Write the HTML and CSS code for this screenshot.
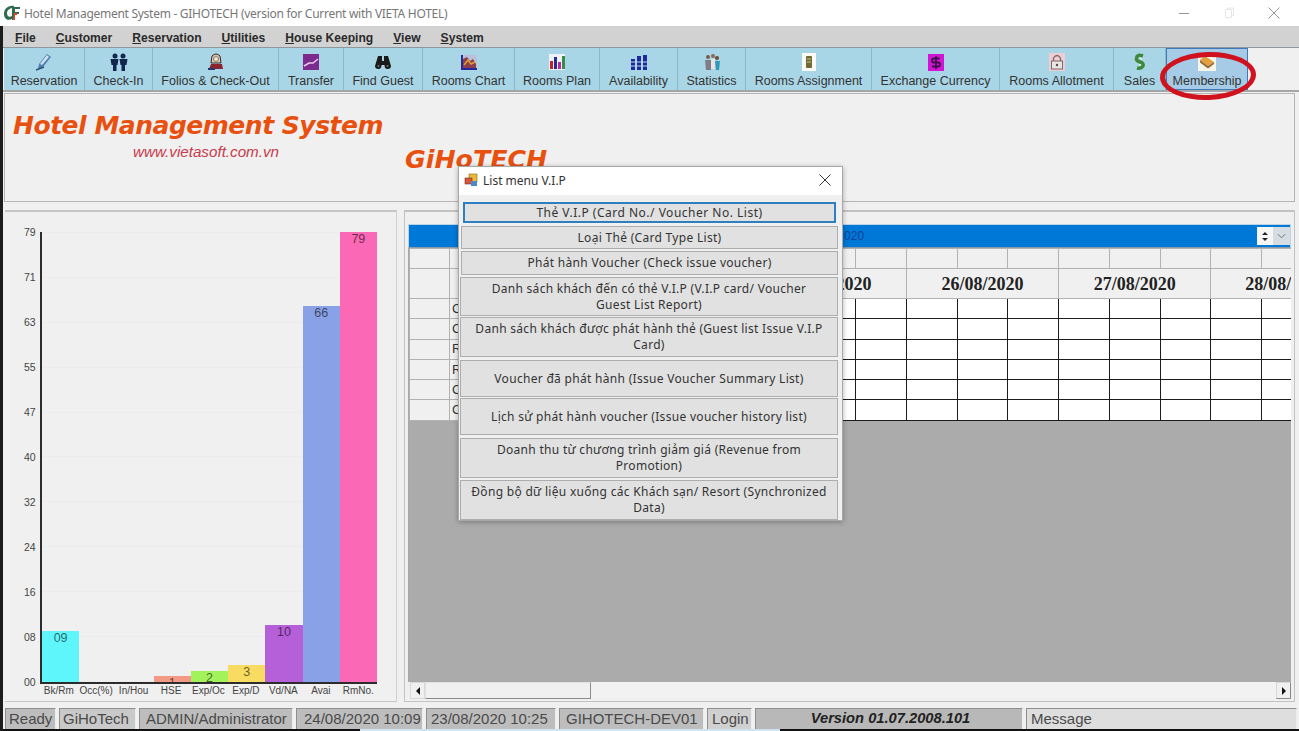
FILE: index.html
```html
<!DOCTYPE html>
<html lang="vi">
<head>
<meta charset="utf-8">
<title>Hotel Management System</title>
<link rel="stylesheet" href="styles.css">
</head>
<body>
<div class="app">
  <header class="titlebar">
    <svg class="app-icon" viewBox="0 0 18 18"><path d="M11 2 C5 1 1 5 1 10 C1 15 5 17 9 15 L9 12 C6 14 4 12 4 9 C4 6 7 4 11 4Z" fill="#2e6b4f"/><path d="M9 3 H17 V5 H12 V8 H16 V10 H12 V16 H9Z" fill="#2e6b4f"/><path d="M11 9 H14 V11 H12 V16 H10Z" fill="#e2452c"/></svg>
    <span class="title-text">Hotel Management System - GIHOTECH (version for Current with VIETA HOTEL)</span>
    <div class="win-controls">
      <svg viewBox="0 0 12 12"><path d="M1 6.5H11" stroke="#999" fill="none"/></svg>
      <svg viewBox="0 0 12 12"><path d="M2.5 2.5H8.5V10.5H2.500Z M4.500 2.500V1H10.500V8.500H8.500" stroke="#e6e6e6" fill="none"/></svg>
      <svg viewBox="0 0 12 12"><path d="M.5 .5L11.500 11.500M11.500 .5L.5 11.500" stroke="#999" fill="none"/></svg>
    </div>
  </header>

  <nav class="menubar">
    <span><u>F</u>ile</span><span><u>C</u>ustomer</span><span><u>R</u>eservation</span><span><u>U</u>tilities</span><span><u>H</u>ouse Keeping</span><span><u>V</u>iew</span><span><u>S</u>ystem</span>
  </nav>

  <div class="toolbar-row">
    <div class="toolbar">
      <div class="tool">
        <svg viewBox="0 0 18 18"><path d="M12 1 L16 4 L8 14 L3 16 L4 11Z" fill="#4f7fb0"/><path d="M12 2 L14 4 L7 12 L5 11Z" fill="#cfe3ee"/><path d="M1 17 L9 14" stroke="#2e4f74" stroke-width="1.500"/></svg>
        <span>Reservation</span>
      </div>
      <div class="tool">
        <svg viewBox="0 0 18 18"><g fill="#12264f"><circle cx="5" cy="3" r="2.500"/><circle cx="13" cy="3" r="2.500"/><path d="M.5 6 H8.500 L7.500 12 H6.500 V18 H3 V12 H1.500Z"/><path d="M9.500 6 H17.500 L16.500 12 H15 V18 H11.500 V12 H10.500Z"/></g></svg>
        <span>Check-In</span>
      </div>
      <div class="tool">
        <svg viewBox="0 0 18 18"><path d="M5 3 Q9 -1 13 3 L14 10 H4Z" fill="#d8c8b0" stroke="#3a2a2a"/><circle cx="9" cy="6" r="2.500" fill="#f4e2cc" stroke="#5a4040" stroke-width=".6"/><path d="M2 16 L4 11 H15 L16 16Z" fill="#8c2430"/><path d="M1 15 H8 V17 H1Z" fill="#27366e"/></svg>
        <span>Folios &amp; Check-Out</span>
      </div>
      <div class="tool">
        <svg viewBox="0 0 18 18"><rect x="1" y="1" width="16" height="16" fill="#7d2a8e"/><path d="M2 13 L7 10 L11 10 L16 6" stroke="#e9c9ee" stroke-width="1.500" fill="none"/></svg>
        <span>Transfer</span>
      </div>
      <div class="tool">
        <svg viewBox="0 0 18 18"><g fill="#1a1a1a"><path d="M4 3 H8 V8 H10 V3 H14 L17 13 Q17 16 13.500 16 Q10.500 16 10.500 12 H7.500 Q7.500 16 4.500 16 Q1 16 1 13Z"/></g><circle cx="4.500" cy="13" r="1" fill="#777"/><circle cx="13.500" cy="13" r="1" fill="#777"/></svg>
        <span>Find Guest</span>
      </div>
      <div class="tool">
        <svg viewBox="0 0 18 18"><rect x="1" y="2" width="16" height="15" fill="#b9c0d8"/><path d="M2 2 V16 H17" stroke="#28289a" stroke-width="2" fill="none"/><path d="M3 15 V6 L7 4 L10 8 L13 6 L16 11 V15Z" fill="#8c3d4e"/><path d="M4 12 L8 7 L11 11 L15 9" stroke="#e2a030" stroke-width="1.500" fill="none"/></svg>
        <span>Rooms Chart</span>
      </div>
      <div class="tool">
        <svg viewBox="0 0 18 18"><rect x="1" y="1" width="16" height="16" fill="#eef2f4"/><rect x="2" y="8" width="3" height="8" fill="#c02424"/><rect x="6" y="4" width="3" height="12" fill="#2f2a9a"/><rect x="10" y="9" width="3" height="7" fill="#b52ca0"/><rect x="14" y="3" width="3" height="13" fill="#3a8a4a"/></svg>
        <span>Rooms Plan</span>
      </div>
      <div class="tool">
        <svg viewBox="0 0 18 18"><g fill="#1c2a9e"><rect x="1" y="6" width="4" height="11"/><rect x="7" y="3" width="4" height="14"/><rect x="13" y="2" width="4" height="15"/></g><path d="M0 9H18M0 13H18" stroke="#b9d8e8"/></svg>
        <span>Availability</span>
      </div>
      <div class="tool">
        <svg viewBox="0 0 18 18"><circle cx="5" cy="4" r="2" fill="#7a5a4a"/><path d="M2 7 H8 V17 H3Z" fill="#7d7d8a"/><circle cx="10" cy="3" r="2" fill="#8a6a5a"/><path d="M8 6 H12 V16 H8Z" fill="#e8e4e4"/><circle cx="14" cy="5" r="2" fill="#6a4a3a"/><path d="M12 8 H17 L16 17 H13Z" fill="#2f9ab8"/></svg>
        <span>Statistics</span>
      </div>
      <div class="tool">
        <svg viewBox="0 0 18 18"><rect x="2" y="0" width="14" height="18" fill="#fbfbf6"/><rect x="6" y="3" width="6" height="12" rx="1" fill="#6d6a38"/><path d="M7 6H11M7 9H11" stroke="#c9c48a"/></svg>
        <span>Rooms Assignment</span>
      </div>
      <div class="tool">
        <svg viewBox="0 0 18 18"><rect x="1" y="1" width="16" height="17" fill="#d414d4"/><path d="M12.500 5.500 H7 Q5 5.500 5 7.500 T7 9.500 H11 Q13 9.500 13 11.500 T11 13.500 H5 M9 3 V16" stroke="#3d1048" stroke-width="1.800" fill="none"/></svg>
        <span>Exchange Currency</span>
      </div>
      <div class="tool">
        <svg viewBox="0 0 18 18"><rect x="1" y="0" width="16" height="18" fill="#f0cdd2"/><path d="M5.500 8 V5 Q9 0 12.500 5 V8" stroke="#7a6a6a" stroke-width="1.300" fill="none"/><rect x="3.500" y="8" width="11" height="8" fill="#e9e6e2" stroke="#7a6a6a"/><circle cx="9" cy="12" r="1.200" fill="#5a4a4a"/></svg>
        <span>Rooms Allotment</span>
      </div>
      <div class="tool">
        <svg viewBox="0 0 18 18"><path d="M12 3 Q6 1 5.500 5 Q5 8 9 9 Q13 10 12 13 Q10 16 6 15" stroke="#3e8a3a" stroke-width="3.500" fill="none"/><path d="M9 5 L11 6 M8 12 L10 12" stroke="#e6f2da" stroke-width="1.500"/></svg>
        <span>Sales</span>
      </div>
      <div class="tool tool-active">
        <svg viewBox="0 0 18 18"><rect x="0" y="0" width="18" height="18" fill="#f5f5ea"/><path d="M2 7 L7 3 L16 9 L10 13Z" fill="#e2a03e"/><path d="M2 7 L10 13 L16 9 V11 L10 15.500 L2 9.500Z" fill="#9a6a2e"/></svg>
        <span>Membership</span>
      </div>
    </div>
  </div>

  <section class="logo-panel">
    <div class="logo-left">
      <div class="logo-title">Hotel Management System</div>
      <div class="logo-url">www.vietasoft.com.vn</div>
    </div>
    <div class="logo-brand">GiHoTECH</div>
  </section>

  <main class="workspace">
    <section class="chart-panel">
      <div class="y-axis">
        <span>79</span><span>71</span><span>63</span><span>55</span><span>47</span><span>40</span><span>32</span><span>24</span><span>16</span><span>08</span><span>00</span>
      </div>
      <div class="chart-main">
        <div class="plot">
          <div class="gridlines"><i></i><i></i><i></i><i></i><i></i><i></i><i></i><i></i><i></i><i></i><i></i></div>
          <div class="bar c-cyan" style="height:51px"><b>09</b></div>
          <div class="bar"></div>
          <div class="bar"></div>
          <div class="bar c-salmon" style="height:6px"><b>1</b></div>
          <div class="bar c-green" style="height:11px"><b>2</b></div>
          <div class="bar c-yellow" style="height:17px"><b>3</b></div>
          <div class="bar c-purple" style="height:57px"><b>10</b></div>
          <div class="bar c-blue" style="height:376px"><b>66</b></div>
          <div class="bar c-pink" style="height:450px"><b>79</b></div>
        </div>
        <div class="x-labels">
          <span>Bk/Rm</span><span>Occ(%)</span><span>In/Hou</span><span>HSE</span><span>Exp/Oc</span><span>Exp/D</span><span>Vd/NA</span><span>Avai</span><span>RmNo.</span>
        </div>
      </div>
    </section>

    <section class="grid-panel">
      <div class="date-bar">
        <span class="date-text">23/08/2020</span>
        <div class="spin"><i class="up"></i><i class="down"></i></div>
        <div class="drop"><svg viewBox="0 0 10 6"><path d="M1 1L5 5L9 1" stroke="#667" fill="none"/></svg></div>
      </div>
      <div class="grid-area">
        <table class="sched">
          <colgroup><col class="c-a"><col class="c-b"><col span="11" class="c-d"></colgroup>
          <tr class="r-top"><th></th><th></th><th></th><th></th><th></th><th></th><th></th><th></th><th></th><th></th><th></th><th></th><th></th></tr>
          <tr class="r-date"><th></th><th></th><th colspan="3">25/08/2020</th><th colspan="3">26/08/2020</th><th colspan="3">27/08/2020</th><th colspan="2" class="left">28/08/2020</th></tr>
          <tr><th></th><th class="nm">C</th><td></td><td></td><td></td><td></td><td></td><td></td><td></td><td></td><td></td><td></td><td></td></tr>
          <tr><th></th><th class="nm">C</th><td></td><td></td><td></td><td></td><td></td><td></td><td></td><td></td><td></td><td></td><td></td></tr>
          <tr><th></th><th class="nm">R</th><td></td><td></td><td></td><td></td><td></td><td></td><td></td><td></td><td></td><td></td><td></td></tr>
          <tr><th></th><th class="nm">R</th><td></td><td></td><td></td><td></td><td></td><td></td><td></td><td></td><td></td><td></td><td></td></tr>
          <tr><th></th><th class="nm">C</th><td></td><td></td><td></td><td></td><td></td><td></td><td></td><td></td><td></td><td></td><td></td></tr>
          <tr><th></th><th class="nm">C</th><td></td><td></td><td></td><td></td><td></td><td></td><td></td><td></td><td></td><td></td><td></td></tr>
        </table>
      </div>
      <div class="hscroll">
        <div class="sb-btn"><i class="arr-l"></i></div>
        <div class="sb-thumb"></div>
        <div class="sb-track"></div>
        <div class="sb-btn raised"><i class="arr-r"></i></div>
      </div>
    </section>
  </main>

  <footer class="statusbar">
    <span class="st st-ready">Ready</span>
    <span class="st st-co">GiHoTech</span>
    <span class="st st-user">ADMIN/Administrator</span>
    <span class="st st-d1">24/08/2020 10:09</span>
    <span class="st st-d2">23/08/2020 10:25</span>
    <span class="st st-host">GIHOTECH-DEV01</span>
    <span class="st st-login">Login</span>
    <span class="st st-ver">Version 01.07.2008.101</span>
    <span class="st st-msg">Message</span>
  </footer>
  <div class="edge-strip"></div>
</div>

<div class="highlight-ring"></div>

<div class="dialog">
  <div class="dlg-title">
    <svg viewBox="0 0 14 14"><rect x="5" y="1" width="8" height="8" fill="#e8b93a" stroke="#8a6a1a" stroke-width=".6"/><rect x="1" y="5" width="7" height="6" fill="#d8553a" stroke="#7a3020" stroke-width=".6"/><rect x="7" y="8" width="6" height="5" fill="#4a8ac8"/></svg>
    <span>List menu V.I.P</span>
    <svg class="dlg-x" viewBox="0 0 12 12"><path d="M.5 .5L11.500 11.500M11.500 .5L.5 11.500" stroke="#333" fill="none"/></svg>
  </div>
  <div class="dlg-body">
    <button class="btn b1">Thẻ V.I.P (Card No./ Voucher No. List)</button>
    <button class="btn b2">Loại Thẻ (Card Type List)</button>
    <button class="btn b3">Phát hành Voucher (Check issue voucher)</button>
    <button class="btn b4">Danh sách khách đến có thẻ V.I.P (V.I.P card/ Voucher Guest List Report)</button>
    <button class="btn b5">Danh sách khách được phát hành thẻ (Guest list Issue V.I.P Card)</button>
    <button class="btn b6">Voucher đã phát hành (Issue Voucher Summary List)</button>
    <button class="btn b7">Lịch sử phát hành voucher (Issue voucher history list)</button>
    <button class="btn b8">Doanh thu từ chương trình giảm giá (Revenue from Promotion)</button>
    <button class="btn b9">Đồng bộ dữ liệu xuống các Khách sạn/ Resort (Synchronized Data)</button>
  </div>
</div>
</body>
</html>
```

FILE: styles.css
```css
* { box-sizing: border-box; }
html, body { margin: 0; padding: 0; }
body {
  width: 1299px;
  height: 731px;
  overflow: hidden;
  position: relative;
  background: #f0f0f0;
  font-family: "Liberation Sans", Arial, sans-serif;
}
.app {
  height: 731px;
  display: flex;
  flex-direction: column;
  background: #f0f0f0;
}

/* title bar */
.titlebar {
  height: 26px;
  flex: none;
  background: #fff;
  display: flex;
  align-items: center;
  padding-left: 3px;
}
.app-icon { width: 18px; height: 18px; flex: none; }
.title-text {
  margin-left: 3px;
  font: 12px "Noto Sans", sans-serif;
  letter-spacing: -.28px;
  color: #777;
}
.win-controls {
  margin-left: auto;
  display: flex;
  gap: 33px;
  padding-right: 19px;
}
.win-controls svg { width: 12px; height: 12px; }

/* menu */
.menubar {
  height: 22px;
  flex: none;
  background: #d2d2d2;
  border-bottom: 1px solid #8f979c;
  display: flex;
  align-items: center;
  gap: 20px;
  padding: 3px 0 0 15px;
  font-size: 12.100px;
  font-weight: bold;
  color: #2a2a2a;
}

/* toolbar */
.toolbar-row {
  height: 44px;
  flex: none;
  padding-left: 4px;
  display: flex;
  background: #f0f0f0;
  border-bottom: 2px solid #a5a5a5;
}
.toolbar { display: flex; background: #a9d6e6; height: 42px; }
.tool {
  display: flex;
  flex-direction: column;
  align-items: center;
  padding-top: 5px;
  border-right: 1px solid #8fb6c6;
  font-size: 12.500px;
  color: #333;
  white-space: nowrap;
}
.tool:nth-child(1) { width: 81px; }
.tool:nth-child(2) { width: 68px; }
.tool:nth-child(3) { width: 126px; }
.tool:nth-child(4) { width: 65px; }
.tool:nth-child(5) { width: 79px; }
.tool:nth-child(6) { width: 92px; }
.tool:nth-child(7) { width: 85px; }
.tool:nth-child(8) { width: 78px; }
.tool:nth-child(9) { width: 68px; }
.tool:nth-child(10) { width: 126px; }
.tool:nth-child(11) { width: 128px; }
.tool:nth-child(12) { width: 114px; }
.tool:nth-child(13) { width: 52px; }
.tool:nth-child(14) { width: 82px; }
.tool svg { width: 18px; height: 18px; margin-bottom: 3px; flex: none; }
.tool-active {
  background: #a6cbe6;
  border: 1px solid #3f79b8;
  padding-top: 4px;
}

/* logo panel */
.logo-panel {
  height: 109px;
  flex: none;
  margin: 1px 4px 0 4px;
  border: 1px solid #b5b5b5;
  display: flex;
  background: #f0f0f0;
}
.logo-left { width: 400px; padding: 16px 0 0 8px; flex: none; }
.logo-title {
  font: italic bold 25px "DejaVu Sans", sans-serif;
  letter-spacing: -.48px;
  color: #e8500f;
  line-height: 32px;
  white-space: nowrap;
}
.logo-url {
  font: italic 15.200px "Liberation Sans", sans-serif;
  color: #c63c4c;
  margin: 1px 0 0 120px;
}
.logo-brand {
  font: italic bold 25.300px "DejaVu Sans", sans-serif;
  color: #e8500f;
  padding-top: 51px;
}

/* workspace */
.workspace {
  height: 492px;
  flex: none;
  margin-top: 8px;
  padding: 0 4px 0 5px;
  display: flex;
  gap: 7px;
}
.chart-panel {
  width: 392px;
  flex: none;
  border-top: 2px solid #c6c6c6;
  border-right: 1px solid #d0d0d0;
  border-bottom: 1px solid #c6c6c6;
  display: flex;
  padding: 14px 0 0 0;
  background: #f0f0f0;
}
.y-axis {
  width: 32px;
  height: 462px;
  flex: none;
  display: flex;
  flex-direction: column;
  justify-content: space-between;
  font-size: 10.500px;
  color: #444;
  padding-left: 19px;
  line-height: 12px;
}
.chart-main { width: 337px; margin-left: 3px; padding-top: 6px; flex: none; }
.plot {
  height: 450px;
  position: relative;
  display: flex;
  align-items: flex-end;
  border-left: 2px solid #2c2c2c;
  border-bottom: 2px solid #2c2c2c;
  box-sizing: content-box;
}
.gridlines {
  position: absolute;
  inset: 0;
  display: flex;
  flex-direction: column;
  justify-content: space-between;
}
.gridlines i { display: block; height: 1px; background: #ececec; }
.bar {
  position: relative;
  flex: 1 1 0;
  text-align: center;
  font-size: 12.500px;
  line-height: 14px;
  overflow: hidden;
}
.bar b { font-weight: normal; color: rgba(0,0,0,.6); }
.c-cyan { background: #5ff6fb; }
.c-salmon { background: #f29a86; }
.c-green { background: #a2f25c; }
.c-yellow { background: #f8dc62; }
.c-purple { background: #b55fd8; }
.c-blue { background: #89a1e6; }
.c-pink { background: #fb68b6; }
.x-labels {
  display: flex;
  font-size: 10px;
  color: #444;
  padding-top: 1px;
}
.x-labels span { flex: 1 1 0; text-align: center; white-space: nowrap; }

/* grid panel */
.grid-panel {
  flex: 1;
  min-width: 0;
  border: 1px solid #c2c2c2;
  border-top-width: 2px;
  padding: 12px 3px 0 3px;
  display: flex;
  flex-direction: column;
  background: #f0f0f0;
}
.date-bar {
  height: 24px;
  flex: none;
  background: #0078d7;
  border: 1px solid #bcd3e4;
  border-bottom-color: #8a9aa6;
  display: flex;
  align-items: center;
  font-size: 12px;
  color: #10409a;
}
.date-text { margin-left: 395px; }
.spin {
  margin-left: auto;
  width: 16px;
  height: 18px;
  background: #f6f6f6;
  display: flex;
  flex-direction: column;
  align-items: center;
  justify-content: center;
  gap: 3px;
}
.up, .down { width: 0; height: 0; border: 3px solid transparent; }
.up { border-top: 0; border-bottom: 3px solid #222; }
.down { border-bottom: 0; border-top: 3px solid #222; }
.drop {
  width: 17px;
  height: 18px;
  background: #d6dde2;
  display: flex;
  align-items: center;
  justify-content: center;
}
.drop svg { width: 9px; height: 6px; }
.grid-area {
  height: 434px;
  flex: none;
  background: #ababab;
  overflow: hidden;
  border-left: 1px solid #a8a8a8;
}
.sched {
  table-layout: fixed;
  width: 902px;
  border-collapse: collapse;
  font-family: "Liberation Serif", serif;
}
.c-a { width: 40px; }
.c-b { width: 305px; }
.c-d { width: 50.700px; }
.sched th {
  background: #f0f0f0;
  border: 1px solid #b2b2b2;
  padding: 0;
  font-weight: bold;
  font-size: 18px;
  line-height: 20px;
  color: #222;
  white-space: nowrap;
  overflow: hidden;
}
.sched td {
  background: #fff;
  border: 1px solid #1c1c1c;
  padding: 0;
}
.sched tr { height: 20.300px; }
.sched .r-top { height: 20px; }
.sched .r-date { height: 30px; }
.sched .left { text-align: left; padding-left: 34px; }
.sched .nm {
  font: 13px/16px "Liberation Sans", sans-serif;
  color: #333;
  text-align: left;
  padding-left: 2px;
}
.hscroll {
  height: 17px;
  flex: none;
  display: flex;
  background: #f2f2f2;
  margin-left: 2px;
}
.sb-btn {
  width: 15px;
  flex: none;
  display: flex;
  align-items: center;
  justify-content: center;
  background: #f0f0f0;
  border: 1px solid #d8d8d8;
}
.sb-btn.raised { border-right-color: #888; border-bottom-color: #888; }
.arr-l, .arr-r { display: block; width: 0; height: 0; border-style: solid; border-color: transparent; border-width: 4px; }
.arr-l { border-left-width: 0; border-right-color: #111; }
.arr-r { border-right-width: 0; border-left-color: #111; }
.sb-thumb {
  width: 166px;
  flex: none;
  background: #f0f0f0;
  border: 1px solid #e2e2e2;
  border-right-color: #8a8a8a;
  border-bottom-color: #8a8a8a;
}
.sb-track { flex: 1; }

/* status bar */
.statusbar {
  height: 21px;
  flex: none;
  margin-top: 6px;
  padding-left: 5px;
  display: flex;
  font-size: 15px;
  color: #4a4a4a;
  line-height: 19px;
  white-space: nowrap;
}
.st {
  flex: none;
  background: #bdbdbd;
  border-top: 1px solid #8e8e8e;
  border-left: 1px solid #8e8e8e;
  border-right: 1px solid #ededed;
  padding-left: 3px;
  margin-right: 3px;
  overflow: hidden;
}
.st-ready { width: 51px; }
.st-co { width: 77px; background: #c9c9c9; }
.st-user { width: 154px; padding-left: 6px; }
.st-d1 { width: 127px; padding-left: 7px; }
.st-d2 { width: 130px; padding-left: 4px; }
.st-host { width: 145px; padding-left: 6px; }
.st-login { width: 45px; padding-left: 4px; background: #d0d0d0; }
.st-ver {
  width: 268px;
  text-align: center;
  font-weight: bold;
  font-style: italic;
  font-size: 14.700px;
  color: #222;
  background: #b8b8b8;
}
.st-msg { width: 271px; margin-right: 0; background: #dedede; padding-left: 4px; }
.edge-strip {
  height: 2px;
  flex: none;
  background: linear-gradient(90deg, #111 0, #111 360px, #cfe4f2 360px, #cfe4f2 780px, #111 780px);
}

/* left dark edge, drawn over the window */
.app::before {
  content: "";
  position: absolute;
  left: 0;
  top: 26px;
  width: 3px;
  height: 705px;
  background: #1c1c1c;
}

/* hand-drawn annotation */
.highlight-ring {
  position: absolute;
  left: 1160px;
  top: 52px;
  width: 96px;
  height: 48px;
  border: 5px solid #d0121f;
  border-radius: 50%;
  transform: rotate(-2deg);
}

/* dialog */
.dialog {
  position: absolute;
  left: 458px;
  top: 166px;
  width: 385px;
  height: 355px;
  background: #f0f0f0;
  border: 1px solid #a8a8a8;
  box-shadow: 0 1px 5px rgba(0,0,0,.3);
  display: flex;
  flex-direction: column;
}
.dlg-title {
  height: 28px;
  flex: none;
  background: #fff;
  display: flex;
  align-items: center;
  padding: 0 0 2px 5px;
  font: 12px "Noto Sans", sans-serif;
  color: #333;
}
.dlg-title svg { width: 14px; height: 14px; margin-right: 5px; }
.dlg-title .dlg-x { width: 12px; height: 12px; margin: 0 11px 0 auto; }
.dlg-body { flex: 1; position: relative; }
.btn {
  position: absolute;
  left: 1px;
  width: 378px;
  padding: 0 13px;
  background: #e1e1e1;
  border: 1px solid #adadad;
  font: 12px/16px "Noto Sans", sans-serif;
  letter-spacing: .3px;
  color: #333;
  text-align: center;
}
.b1 { top: 7px; height: 21px; left: 4px; width: 373px; border: 2px solid #2f7fc0; letter-spacing: .5px; }
.b2 { top: 31px; height: 23px; left: 2px; width: 377px; }
.b3 { top: 56px; height: 24px; left: 2px; width: 377px; }
.b4 { top: 82px; height: 39px; }
.b5 { top: 122px; height: 40px; }
.b6 { top: 165px; height: 37px; }
.b7 { top: 203px; height: 37px; }
.b8 { top: 243px; height: 40px; }
.b9 { top: 285px; height: 40px; padding: 0 6px; }
```
